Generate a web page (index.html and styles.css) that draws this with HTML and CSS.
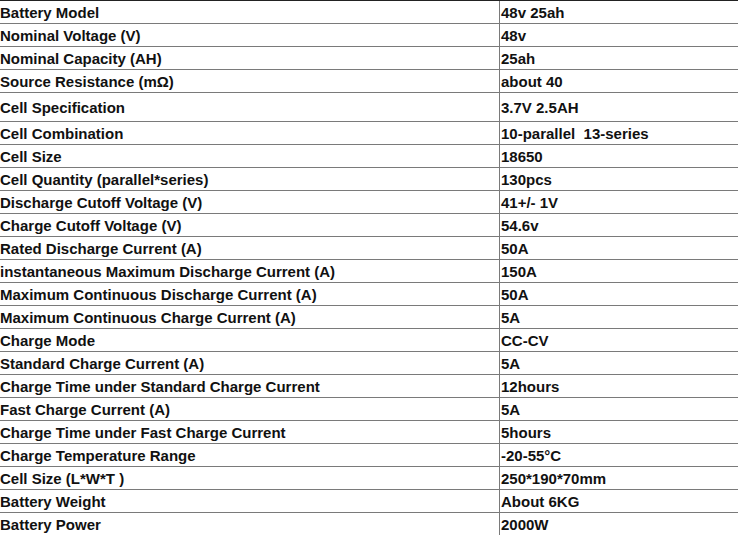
FILE: index.html
```html
<!DOCTYPE html>
<html>
<head>
<meta charset="utf-8">
<link rel="stylesheet" href="styles.css">
</head>
<body>
<div class="spec">
  <div class="row"><div class="k">Battery Model</div><div class="v">48v 25ah</div></div>
  <div class="row"><div class="k">Nominal Voltage (V)</div><div class="v">48v</div></div>
  <div class="row"><div class="k">Nominal Capacity (AH)</div><div class="v">25ah</div></div>
  <div class="row"><div class="k">Source Resistance (mΩ)</div><div class="v">about 40</div></div>
  <div class="row tall"><div class="k">Cell Specification</div><div class="v">3.7V 2.5AH</div></div>
  <div class="row"><div class="k">Cell Combination</div><div class="v">10-parallel&nbsp; 13-series</div></div>
  <div class="row"><div class="k">Cell Size</div><div class="v">18650</div></div>
  <div class="row"><div class="k">Cell Quantity (parallel*series)</div><div class="v">130pcs</div></div>
  <div class="row"><div class="k">Discharge Cutoff Voltage (V)</div><div class="v">41+/- 1V</div></div>
  <div class="row"><div class="k">Charge Cutoff Voltage (V)</div><div class="v">54.6v</div></div>
  <div class="row"><div class="k">Rated Discharge Current (A)</div><div class="v">50A</div></div>
  <div class="row"><div class="k">instantaneous Maximum Discharge Current (A)</div><div class="v">150A</div></div>
  <div class="row"><div class="k">Maximum Continuous Discharge Current (A)</div><div class="v">50A</div></div>
  <div class="row"><div class="k">Maximum Continuous Charge Current (A)</div><div class="v">5A</div></div>
  <div class="row"><div class="k">Charge Mode</div><div class="v">CC-CV</div></div>
  <div class="row"><div class="k">Standard Charge Current (A)</div><div class="v">5A</div></div>
  <div class="row"><div class="k">Charge Time under Standard Charge Current</div><div class="v">12hours</div></div>
  <div class="row"><div class="k">Fast Charge Current (A)</div><div class="v">5A</div></div>
  <div class="row"><div class="k">Charge Time under Fast Charge Current</div><div class="v">5hours</div></div>
  <div class="row"><div class="k">Charge Temperature Range</div><div class="v">-20-55°C</div></div>
  <div class="row"><div class="k">Cell Size (L*W*T )</div><div class="v">250*190*70mm</div></div>
  <div class="row"><div class="k">Battery Weight</div><div class="v">About 6KG</div></div>
  <div class="row"><div class="k">Battery Power</div><div class="v">2000W</div></div>
</div>
</body>
</html>
```

FILE: styles.css
```css
html, body {
  margin: 0;
  padding: 0;
  background: #fff;
}
body {
  width: 738px;
  height: 535px;
  overflow: hidden;
  font-family: "Liberation Sans", Arial, sans-serif;
  font-weight: bold;
  font-size: 15px;
  color: #111;
}
.spec {
  border-top: 1px solid #222;
}
.row {
  display: grid;
  grid-template-columns: 500px 1fr;
  height: 22px;
  border-bottom: 1px solid #7a7a7a;
}
.row.tall {
  height: 28px;
}
.k, .v {
  display: flex;
  align-items: center;
  white-space: nowrap;
  overflow: hidden;
}
.k {
  border-right: 1px solid #7a7a7a;
  padding-left: 0;
}
.v {
  padding-left: 1px;
}
```
